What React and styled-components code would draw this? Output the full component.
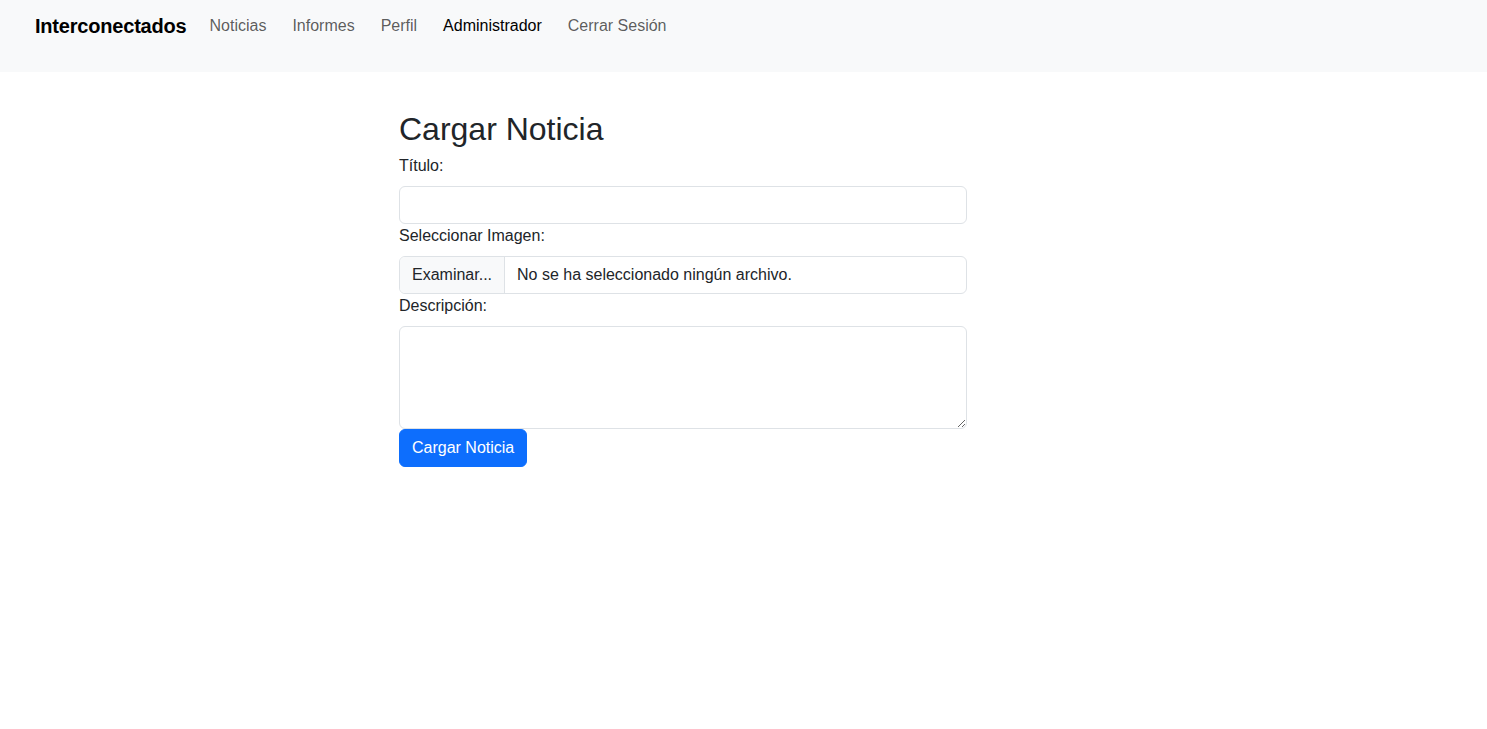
import styled, { createGlobalStyle } from "styled-components";

const Global = createGlobalStyle`
    * { box-sizing: border-box; }
    body {
        margin: 0;
        font-family: "Liberation Sans", Arial, sans-serif;
        font-size: 16px;
        line-height: 1.5;
        color: #212529;
        background: #fff;
    }
`

const links = [
    { name: "Noticias" },
    { name: "Informes" },
    { name: "Perfil" },
    { name: "Administrador", active: true },
    { name: "Cerrar Sesión" },
]

const App = () => {
    return (<>
        <Global />
        <Navbar>
            <Brand href="#">Interconectados</Brand>
            <NavList>
                {links.map((item, index) => {
                    const { name, active } = item;
                    return <NavItem key={index} href="#" $active={active}>{name}</NavItem>
                })}
            </NavList>
        </Navbar>
        <Main>
            <Title>Cargar Noticia</Title>
            <Form onSubmit={(e) => e.preventDefault()}>
                <Label htmlFor="titulo">Título:</Label>
                <Input id="titulo" type="text" />
                <Label>Seleccionar Imagen:</Label>
                <FileBox>
                    <FileButton>Examinar...</FileButton>
                    <FileName>No se ha seleccionado ningún archivo.</FileName>
                </FileBox>
                <Label htmlFor="desc">Descripción:</Label>
                <TextArea id="desc" rows={4} />
                <Submit type="submit">Cargar Noticia</Submit>
            </Form>
        </Main>
    </>)
}

const Navbar = styled.nav`
    height: 72px;
    background: #f8f9fa;
    display: flex;
    align-items: flex-start;
    padding: 11px 0 0 35px;
`

const Brand = styled.a`
    font-size: 20px;
    font-weight: 700;
    line-height: 30px;
    color: #000;
    text-decoration: none;
    margin-right: 10px;
    letter-spacing: -0.2px;
`

const NavList = styled.div`
    display: flex;
`

const NavItem = styled.a`
    font-size: 16px;
    line-height: 30px;
    padding: 0 13px;
    text-decoration: none;
    color: ${p => p.$active ? "#000" : "rgba(0,0,0,.65)"};
`

const Main = styled.main`
    width: 568px;
    margin: 0 0 0 399px;
    padding-top: 38px;
`

const Title = styled.h2`
    font-size: 32px;
    font-weight: 400;
    line-height: 1.2;
    margin: 0 0 6px;
`

const Form = styled.form`
    display: flex;
    flex-direction: column;
    align-items: flex-start;
`

const Label = styled.label`
    display: block;
    line-height: 24px;
    margin-bottom: 8px;
`

const Input = styled.input`
    width: 100%;
    height: 38px;
    border: 1px solid #dee2e6;
    border-radius: 6px;
    padding: 6px 12px;
    font: inherit;
    outline: none;
`

const FileBox = styled.div`
    width: 100%;
    height: 38px;
    display: flex;
    border: 1px solid #dee2e6;
    border-radius: 6px;
    overflow: hidden;
`

const FileButton = styled.span`
    display: flex;
    align-items: center;
    padding: 0 12px;
    background: #f8f9fa;
    border-right: 1px solid #dee2e6;
`

const FileName = styled.span`
    display: flex;
    align-items: center;
    padding: 0 12px;
`

const TextArea = styled.textarea`
    width: 100%;
    height: 103px;
    border: 1px solid #dee2e6;
    border-radius: 6px;
    padding: 6px 12px;
    font: inherit;
    resize: vertical;
    outline: none;
    display: block;
`

const Submit = styled.button`
    height: 38px;
    padding: 0 12px;
    font: inherit;
    color: #fff;
    background: #0d6efd;
    border: 1px solid #0d6efd;
    border-radius: 6px;
    cursor: pointer;
`

export default App
